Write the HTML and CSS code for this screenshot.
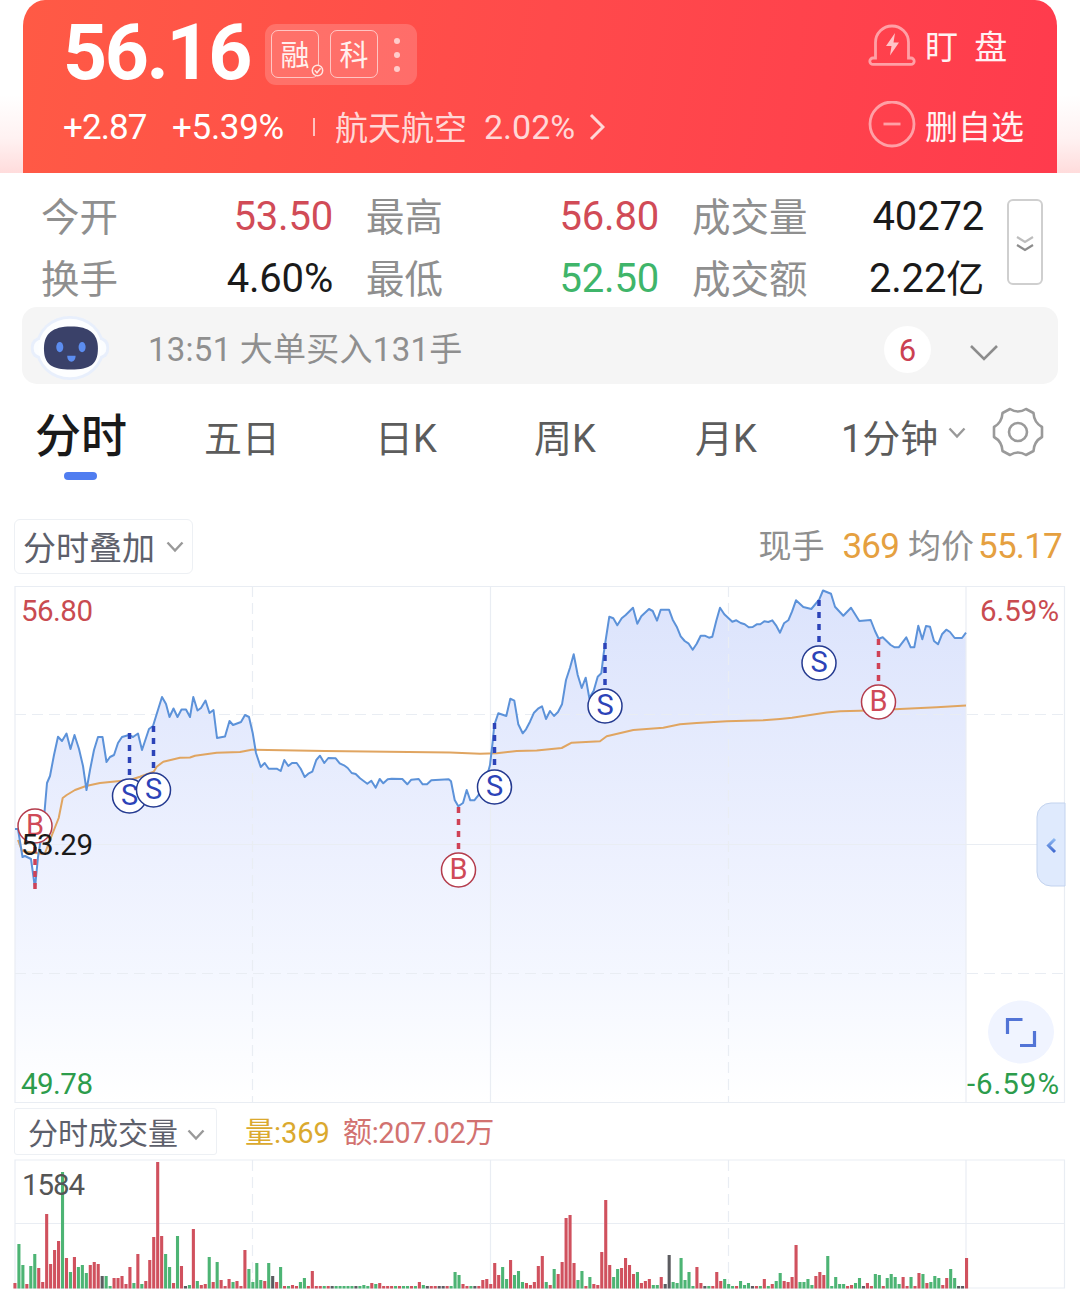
FILE: index.html
```html
<!DOCTYPE html>
<html lang="zh-CN">
<head>
    <meta charset="UTF-8">
    <title>分时</title>
    <link rel="stylesheet" href="styles.css">
</head>
<body>
    <div class="top">
        <div class="quote">
            <div class="quote-main">
                <div class="price-row">
                    <span class="price">56.16</span>
                    <div class="tags">
                        <span class="tag">融
                            <svg class="check" width="13" height="13" viewBox="0 0 13 13"><circle cx="6.5" cy="6.5" r="5.2" /><path d="M3.8 6.2l2.2 2.6 3.6-4.6" /></svg>
                        </span>
                        <span class="tag">科</span>
                        <span class="dots"><i></i><i></i><i></i></span>
                    </div>
                </div>
                <div class="change-row">
                    <span class="diff">+2.87</span>
                    <span class="pct">+5.39%</span>
                    <i class="sep"></i>
                    <span class="sector">航天航空</span>
                    <span class="sector-pct">2.02%</span>
                    <svg class="arrow" width="16" height="28" viewBox="0 0 16 28"><path d="M2 2l12 12L2 26" /></svg>
                </div>
            </div>
            <div class="actions">
                <div class="action">
                    <svg class="action-icon" width="48" height="48" viewBox="0 0 48 48">
                        <path d="M7.500 37V21.500a16.500 16.500 0 0 1 33 0V37h2.500a3 3 0 0 1 0 6.400H5a3 3 0 0 1 0-6.400z" />
                        <path class="solid" d="M27 12l-9 13h5.500l-1.500 9.500 9-13h-5.500z" />
                    </svg>
                    <span class="watch">盯 盘</span>
                </div>
                <div class="action">
                    <svg class="action-icon" width="48" height="48" viewBox="0 0 48 48"><circle cx="24" cy="23" r="22" /><path d="M15.500 23h17" /></svg>
                    <span>删自选</span>
                </div>
            </div>
        </div>
    </div>

    <div class="stats">
        <div class="stats-grid">
            <span class="label">今开</span><span class="value red">53.50</span>
            <span class="label">最高</span><span class="value red">56.80</span>
            <span class="label">成交量</span><span class="value">40272</span>
            <span class="label">换手</span><span class="value">4.60%</span>
            <span class="label">最低</span><span class="value green">52.50</span>
            <span class="label">成交额</span><span class="value">2.22<b>亿</b></span>
        </div>
        <div class="expand">
            <svg width="20" height="20" viewBox="0 0 20 20"><path class="faint" d="M2 3l8 5 8-5" /><path d="M2 11l8 5 8-5" /></svg>
        </div>
    </div>

    <div class="notice">
        <svg class="robot" width="80" height="66" viewBox="0 0 86 72" preserveAspectRatio="none">
            <ellipse cx="43" cy="36" rx="37" ry="35" fill="#e8effc" />
            <rect x="1" y="24" width="84" height="24" rx="10" fill="#e8effc" />
            <rect x="4" y="27" width="78" height="18" rx="8" fill="#fbfdff" />
            <ellipse cx="43" cy="36" rx="34" ry="32" fill="#fdfeff" />
            <path d="M44 12.500c20 0 29 8 29 24 0 17-8 23-29 23s-29-6-29-23c0-16 9-24 29-24z" fill="#3a4169" />
            <ellipse cx="32" cy="35" rx="3.800" ry="5.500" fill="#5c8df0" />
            <ellipse cx="56" cy="35" rx="3.800" ry="5.500" fill="#5c8df0" />
            <path d="M40 44.500h9c0 4-2 6.500-4.500 6.500s-4.500-2.500-4.500-6.500z" fill="#5c8df0" />
        </svg>
        <span class="notice-text">13:51 大单买入131手</span>
        <span class="count">6</span>
        <svg class="chev" width="30" height="18" viewBox="0 0 30 18"><path d="M2 2l13 13L28 2" /></svg>
    </div>

    <div class="tabs">
        <span class="tab active">分时</span>
        <span class="tab">五日</span>
        <span class="tab">日K</span>
        <span class="tab">周K</span>
        <span class="tab">月K</span>
        <span class="tab">1分钟<svg class="tab-chev" width="18" height="12" viewBox="0 0 18 12"><path d="M1.500 1.500L9 9.500l7.500-8" /></svg></span>
        <svg class="gear" width="52" height="50" viewBox="0 0 52 50">
            <path d="M18 2q8 5 16 0l7.500 4q.5 9.500 8.500 14v10q-8 4.500-8.500 14L34 48q-8-5-16 0l-7.500-4Q10 34.500 2 30V20q8-4.500 8.500-14z" />
            <circle cx="26" cy="25" r="9" />
        </svg>
    </div>

    <div class="chart-head">
        <div class="select"><span>分时叠加</span><svg width="18" height="12" viewBox="0 0 18 12"><path d="M1.500 1.500L9 9.500l7.500-8" /></svg></div>
        <div class="readout">
            <span>现手</span><span class="orange now">369</span><span>均价</span><span class="orange avg">55.17</span>
        </div>
    </div>

    <svg class="chart" width="1080" height="519" viewBox="0 585 1080 519">
        <defs>
            <linearGradient id="area" x1="0" y1="586" x2="0" y2="1102" gradientUnits="userSpaceOnUse">
                <stop offset="0" stop-color="#dbe3fc" />
                <stop offset=".5" stop-color="#ecf0fe" />
                <stop offset=".75" stop-color="#f4f7ff" />
                <stop offset="1" stop-color="#ffffff" />
            </linearGradient>
            <linearGradient id="back" x1="0" y1="839" x2="0" y2="852" gradientUnits="userSpaceOnUse">
                <stop offset="0" stop-color="#8fbaf2" />
                <stop offset="1" stop-color="#3f68cf" />
            </linearGradient>
        </defs>
        <path id="fill" fill="url(#area)" />
        <g class="grid">
            <path d="M15 586.500H1064.500V1102.500H15zM490.500 586V1102M966 586V1102M15 844.500H1064" />
            <path class="dashed" d="M252.500 586V1102M728.500 586V1102M15 714.500H1064M15 973.500H1064" />
        </g>
        <polyline class="avg-line" points="18,840 22,851 35,853 44.700,854 50,840 58.700,818 62.700,798 66.700,795 75,790 86,786 100,783 130,780 140,776.700 153.700,771.700 156.700,766.700 163.300,761.700 180,757.700 190,757.500 195,755.700 216.700,752.700 240,752 251.700,749.700 325,751 450,752.500 480,753.700 496.700,753.300 516.700,751 536.700,750.500 561.700,748 571.700,742.700 600,741.300 606.700,736.300 633.300,730 663.300,727.700 680,724.300 696.700,723 726.700,721.300 763.300,720.300 780,719 792,717.800 826.700,712.500 840,711.300 860,710.700 900,709 936.700,707.300 966,705.500" />
        <polyline id="price" class="price-line" points="15,829 18,829 22.500,857 25,856 31,859 35,888 38,857 41,838 44.500,812 47,783 50,776 54,755 58,736.700 62,741 66.500,733.500 70.500,749 74.500,735 79,749 83,766 86.500,790 90,770 94,750 98,737 102.500,737 106.500,762 110,757 114,755 118,743 122,737 129,735 133,737 138,733.500 142,750 149,729 153,726 157,713 162,697 166,704 169.500,717 173.500,708.500 177.500,717 181.500,709.500 186,709.500 190,717 193.300,697 197.500,710.500 201,708 205.500,700.500 209.500,713 213.500,710 217,738 225,736.500 229.500,721 233,725 241,722 245,715 249,717 252.700,733 256,753 260.700,767 264.700,763 268.700,768.700 276.700,768.700 280.700,771 284.300,760 288.300,766 292,763 296.700,763 300.700,768.700 304.700,777 308.300,773.700 312.300,771.700 316.300,760 320,755.700 324.300,763 328.300,758 335.700,758.300 339.700,763.300 344,765.300 347.700,768 351.700,773 355.700,774 360,778.300 367.300,783.700 371.300,780.700 375.700,787.700 379.700,779 383.300,783.300 387.700,779.300 391.700,778.700 402.300,779 407.300,784.300 411.300,779.700 418.700,779 422.700,784.300 427,784.300 431.300,780.300 440,779.700 448.700,779.300 451,781.300 454.700,800 458.300,806.300 463,803 466.700,790 470.300,800.300 474.300,800.300 478.300,795.300 486,780 490,765 492.700,741.700 494.300,725 498.300,713.300 506.300,716 510.300,698.700 514.300,700.700 518.300,724.300 522.700,733.300 526,729.300 530,721.700 534,712.700 538,708.700 542,706.300 546,719 550,711 554,716 558,712 562,704.300 566,680 570,667.700 573.700,654.300 577.700,675 581.700,688 585.700,677.700 589.300,698 593.700,690.700 597.700,676.700 601.300,673.300 603.700,653.300 605.700,640 609.300,616.700 613.300,618.300 617.300,625.300 621.700,618.300 625.700,615 633,607.700 637.300,623.700 641.300,616.300 649,609 652.700,611 657,620.700 660.700,609.700 669,609.700 672.700,619.700 676.700,626.700 680.700,636.300 684.700,641 688.700,643.700 692.700,649.700 696.700,643.700 700.700,635.700 704.700,635.700 709,637.700 712.300,636.700 716.300,620.700 720,607.700 724.300,614.300 732.300,621.700 736.300,620.300 740.700,623 744.700,624.300 748.700,627.300 752.700,627 756.700,624.300 760.300,624.300 764.300,621.300 768.300,622 772.300,620.300 776,625.300 780,632.700 784,623.300 788.300,620.300 792,611.700 796,600.300 803.300,607 811.300,609 819.300,599.300 823,590.500 831,593.700 835,606.700 843.300,615.700 851,607.700 859.300,621 870.700,620 875,631 878.700,638.700 882.700,637.300 890.700,645 894.700,647.300 898.700,647.300 906.300,637.300 910.700,647.300 914.300,647.300 918.300,625.700 922.300,639.300 926,626 930,626.700 934,641 938,644.300 942,634.300 946.300,629.700 950,632 954.700,638 962,638 966,632.700" />
        <g id="trades"></g>

        <text class="axis red" x="21" y="621" textLength="72">56.80</text>
        <text class="axis" x="21" y="855" textLength="72">53.29</text>
        <text class="axis down" x="21" y="1094" textLength="72">49.78</text>
        <text class="axis red" x="980" y="621" textLength="79">6.59%</text>
        <text class="axis down" x="967" y="1094" textLength="92">-6.59%</text>

        <path d="M1065 803h-14a14 14 0 0 0-14 14v55a14 14 0 0 0 14 14h14z" fill="#dfeafd" stroke="#c3d3ee" stroke-width="1" />
        <path d="M1055 839l-6.500 6.500 6.500 6.500" fill="none" stroke="url(#back)" stroke-width="3" />
        <ellipse cx="1021" cy="1032" rx="33" ry="31.500" fill="#f0f4ff" />
        <path class="full" d="M1007.500 1034V1019.500H1022.500M1034.500 1031V1045.500H1020" />
    </svg>

    <div class="vol-head">
        <div class="select small"><span>分时成交量</span><svg width="18" height="12" viewBox="0 0 18 12"><path d="M1.500 1.500L9 9.500l7.500-8" /></svg></div>
        <span class="vol">量:369</span>
        <span class="amount">额:207.02万</span>
    </div>

    <svg class="volume" width="1080" height="132" viewBox="0 1159 1080 132">
        <g class="grid">
            <path d="M15 1160H1064.500V1288H15zM490.500 1160V1288M966 1160V1288M15 1223.500H1064" />
            <path class="dashed" d="M252.500 1160V1288M728.500 1160V1288" />
        </g>
        <g id="bars"></g>
        <text class="axis max" x="22" y="1195" textLength="63">1584</text>
    </svg>

    <script src="chart.js"></script>
</body>
</html>
```
FILE: styles.css
```css
body {
    margin: 0;
    width: 1080px;
    height: 1291px;
    overflow: hidden;
    background: #fff;
    color: #1a1a1a;
    font-family: Roboto, "Noto Sans CJK SC", sans-serif;
}

span, div {
    white-space: nowrap;
}

svg {
    display: block;
    flex: none;
    fill: none;
}

.top {
    height: 173px;
    padding: 0 23px;
    background: linear-gradient(#fff 55%, #fff2f2 80%, #ffdcdc);
}

.quote {
    display: flex;
    justify-content: space-between;
    height: 173px;
    border-radius: 22px 22px 0 0 / 26px 26px 0 0;
    background: linear-gradient(100deg, #ff5a45, #ff4a4b 50%, #ff3b4d);
    color: #fff;
}

.quote-main {
    padding-left: 40px;
}

.price-row {
    display: flex;
    height: 102px;
}

.price {
    width: 202px;
    font-size: 77px;
    font-weight: 700;
    line-height: 106px;
    letter-spacing: -2.400px;
}

.tags {
    display: flex;
    box-sizing: border-box;
    width: 152px;
    height: 61px;
    margin-top: 24px;
    padding: 6px;
    gap: 11px;
    border-radius: 11px;
    background: rgba(255, 255, 255, .18);
}

.tag {
    position: relative;
    box-sizing: border-box;
    width: 48px;
    height: 48px;
    border: 1px solid rgba(255, 255, 255, .6);
    border-radius: 7px;
    font-size: 29px;
    line-height: 50px;
    text-align: center;
    color: #fff0ee;
}

.check {
    position: absolute;
    right: -6px;
    bottom: 0;
    fill: #ff6a5e;
    stroke: #ffe3e0;
    stroke-width: 1.5;
}

.dots {
    display: flex;
    flex-direction: column;
    gap: 8px;
    padding: 8px 0 0 5px;
}

.dots i {
    width: 6px;
    height: 6px;
    border-radius: 3px;
    background: rgba(255, 255, 255, .65);
}

.change-row {
    display: flex;
    align-items: center;
    height: 50px;
    font-size: 35px;
}

.diff {
    width: 109px;
    letter-spacing: -.9px;
}

.pct {
    width: 141px;
    letter-spacing: -.3px;
}

.sep {
    width: 2px;
    height: 18px;
    margin-right: 20px;
    background: rgba(255, 255, 255, .65);
}

.sector, .sector-pct {
    width: 149px;
    font-size: 33px;
    line-height: 46px;
    color: rgba(255, 255, 255, .78);
}

.sector {
    margin-top: 3px;
}

.sector-pct {
    width: 105px;
    font-size: 34px;
}

.arrow {
    stroke: rgba(255, 255, 255, .78);
    stroke-width: 3;
}

.actions {
    width: 189px;
    padding-top: 20px;
}

.action {
    display: flex;
    align-items: center;
    gap: 9px;
    height: 50px;
    margin-bottom: 30px;
    font-size: 33px;
    color: #fff2f3;
}

.watch {
    word-spacing: 8px;
}

.action-icon {
    stroke: #ffa0a6;
    stroke-width: 2.8;
}

.action-icon .solid {
    fill: #ffc4c8;
    stroke: none;
}

.stats {
    display: flex;
    height: 134px;
    padding-left: 41px;
}

.stats-grid {
    display: grid;
    grid-template-columns: 134px 158px 168px 158px 168px 157px;
    grid-template-rows: 62px 62px;
    padding-top: 13px;
    line-height: 62px;
    margin-right: 23px;
}

.label {
    padding-top: 1px;
    font-size: 38.500px;
    color: #8f8f8f;
}

.label:nth-child(6n + 3), .label:nth-child(6n + 5) {
    padding-left: 33px;
}

.value {
    font-size: 40px;
    text-align: right;
    letter-spacing: -.2px;
}

.value b {
    font-size: 38px;
    font-weight: 400;
}

.red {
    color: #d14b57;
}

.green {
    color: #3fb56a;
}

.expand {
    display: flex;
    align-items: center;
    justify-content: center;
    box-sizing: border-box;
    width: 36px;
    height: 86px;
    margin-top: 26px;
    padding-top: 4px;
    border: 2px solid #cfcfcf;
    border-radius: 6px;
}

.expand svg {
    stroke: #8c8c8c;
    stroke-width: 2.2;
}

.expand .faint {
    stroke: #bdbdbd;
}

.notice {
    display: flex;
    align-items: center;
    box-sizing: border-box;
    width: 1036px;
    height: 77px;
    margin-left: 22px;
    padding: 0 59px 0 8px;
    border-radius: 15px;
    background: #f5f5f5;
}

.robot {
    margin-top: 4px;
}

.notice-text {
    flex: 1;
    margin: 8px 0 0 38px;
    font-size: 33px;
    line-height: 60px;
    letter-spacing: .25px;
    color: #8f8f8f;
}

.count {
    width: 47px;
    height: 47px;
    margin: 8px 38px 0 0;
    border-radius: 50%;
    background: #fff;
    color: #cb4152;
    font-size: 31px;
    line-height: 50px;
    text-align: center;
}

.chev {
    margin-top: 14px;
    stroke: #8c8c8c;
    stroke-width: 2.6;
}

.tabs {
    display: grid;
    grid-template-columns: 169px 171px 159px 161px 146px 151px 52px;
    height: 135px;
    padding-left: 35px;
}

.tab {
    padding-top: 24px;
    font-size: 38px;
    line-height: 62px;
    color: #5c5c5c;
}

.tab.active {
    padding-top: 21px;
    font-size: 46px;
    font-weight: 500;
    color: #1a1a1a;
}

.tab.active::after {
    content: "";
    display: block;
    width: 33px;
    height: 8px;
    margin: 5px 0 0 29px;
    border-radius: 4px;
    background: #507df0;
}

.tab-chev {
    display: inline-block;
    margin-left: 10px;
    vertical-align: 13px;
    stroke: #999;
    stroke-width: 2.4;
}

.gear {
    margin-top: 23px;
    stroke: #9a9a9a;
    stroke-width: 2.6;
    stroke-linejoin: round;
}

.chart-head {
    display: flex;
    justify-content: space-between;
    height: 66px;
    padding: 0 18px 0 14px;
}

.select {
    display: flex;
    align-items: center;
    box-sizing: border-box;
    width: 179px;
    height: 55px;
    padding-left: 8px;
    gap: 11px;
    border: 1px solid #edf0f4;
    border-radius: 6px;
    font-size: 33px;
    color: #5d606b;
}

.select span {
    margin-top: -1px;
}

.select svg {
    stroke: #999;
    stroke-width: 2.4;
}

.readout {
    font-size: 33px;
    line-height: 56px;
    color: #8f8f8f;
}

.orange {
    font-size: 35px;
    letter-spacing: -.8px;
    color: #e5a040;
}

.now {
    margin: 0 9px 0 18px;
}

.avg {
    margin-left: 4px;
}

.grid {
    stroke: #e9edf3;
    stroke-width: 1.2;
}

.dashed {
    stroke-dasharray: 11 6;
}

.price-line, .avg-line {
    stroke: #5c92d9;
    stroke-width: 2;
    stroke-linejoin: round;
}

.avg-line {
    stroke: #e0a561;
}

.trade path {
    stroke: #2c43b8;
    stroke-width: 3.5;
    stroke-dasharray: 6;
}

.trade circle {
    fill: #fff;
    stroke: #243a90;
    stroke-width: 1.5;
}

.trade text {
    font-size: 29px;
    text-anchor: middle;
    fill: #2c43b8;
}

.trade.buy path {
    stroke: #cf4256;
}

.trade.buy circle {
    stroke: #b43c4c;
}

.trade.buy text {
    fill: #cf4a58;
}

.axis {
    font-size: 29.500px;
    fill: #1a1a1a;
}

.axis.red {
    fill: #c94b50;
}

.axis.down {
    fill: #2c9c4c;
}

.axis.max {
    fill: #555;
}

.full {
    stroke: #5274d6;
    stroke-width: 3.2;
}

.vol-head {
    display: flex;
    align-items: center;
    height: 47px;
    margin: 4px 0;
    padding-left: 14px;
    font-size: 29px;
}

.select.small {
    width: 203px;
    height: 47px;
    padding-left: 13px;
    gap: 9px;
    border-radius: 3px;
    font-size: 30px;
}

.select.small svg {
    margin-top: 6px;
}

.vol {
    width: 98px;
    margin: -4px 0 0 28px;
    color: #dba92e;
}

.amount {
    margin-top: -4px;
    letter-spacing: -.35px;
    color: #d27270;
}
```
FILE: chart.js
```js
var SVG = "http://www.w3.org/2000/svg";
var COLORS = { r: "#d0515e", g: "#4db474", k: "#5c5c60" };

// one bar per minute: colour and height
var volume = "r5 g44 g23 r4 g22 g34 r20 r6 r74 r24 r38 r47 g116 r30 g16 r31 g21 g23 g15 r23 r26 r24 k12 g12 g2 r10 r10 r12 r4 r21 " +
    "g5 r34 g4 r7 r28 r51 r126 r52 g34 g21 r5 g52 r22 k2 g3 r59 g7 r3 r4 g31 r6 g26 r8 r2 r9 g6 r7 r2 r38 g19 " +
    "g6 g25 g8 r7 g25 k12 r6 g21 r2 g2 r3 r2 g6 g10 r2 r17 r2 r2 g2 r2 k2 g2 g2 g2 g2 g2 k2 g2 g3 g2 " +
    "r5 g4 r5 r2 r2 r2 g2 r2 g2 g2 r2 g2 r6 g3 k2 r2 r2 k2 k2 r2 g2 g16 g13 r4 r2 g2 k2 r2 r8 r9 " +
    "r4 r25 r13 g21 g9 r28 g13 g17 g6 r5 r3 r6 r22 r32 g6 r3 g19 r14 r26 r70 r73 r25 g8 g17 r2 g11 r4 r3 r36 r88 " +
    "r23 g11 g19 r20 r30 r23 r14 g16 r5 r7 r9 g3 g3 r11 k4 k33 g6 g5 g30 g8 g16 g2 r21 r5 k2 g2 r2 r16 r7 g9 " +
    "g4 g2 r2 g7 g3 g5 k2 r2 g2 r9 g2 r4 g7 g15 r7 r6 r11 r43 g6 g6 g9 g3 r12 r16 r13 g32 g2 g11 g4 g4 " +
    "r2 r3 g5 g10 k2 r5 r2 g14 g13 r2 g10 g14 g11 g4 r11 r2 g11 r2 r15 g14 r5 g6 g12 g10 r3 r10 g19 g10 k2 k2 r30";

// x, start of the dashed line, centre of the badge
var trades = [
    ["B", 35, 889, 826],
    ["S", 129.5, 733, 796],
    ["S", 153.5, 726, 790],
    ["B", 458.5, 807, 870],
    ["S", 494.5, 723, 787],
    ["S", 605, 643, 706],
    ["S", 819, 600, 663],
    ["B", 878.5, 639, 702]
];

function add(parent, name, attrs) {
    var el = document.createElementNS(SVG, name);
    for (var key in attrs)
        el.setAttribute(key, attrs[key]);
    parent.appendChild(el);
    return el;
}

var bars = document.getElementById("bars");
volume.split(" ").forEach(function (item, i) {
    var h = +item.slice(1) + 0.5;
    add(bars, "rect", { x: 13.4 + i * 3.965, y: 1288.5 - h, width: 3.1, height: h, fill: COLORS[item[0]] });
});

var points = document.getElementById("price").getAttribute("points");
document.getElementById("fill").setAttribute("d", "M15,1102L" + points + "L966,1102z");

var layer = document.getElementById("trades");
trades.forEach(function (t) {
    var g = add(layer, "g", { "class": t[0] == "B" ? "trade buy" : "trade" });
    add(g, "path", { d: "M" + t[1] + " " + t[2] + "V" + t[3] });
    add(g, "circle", { cx: t[1], cy: t[3], r: 17 });
    add(g, "text", { x: t[1], y: t[3] + 9 }).textContent = t[0];
});
```
